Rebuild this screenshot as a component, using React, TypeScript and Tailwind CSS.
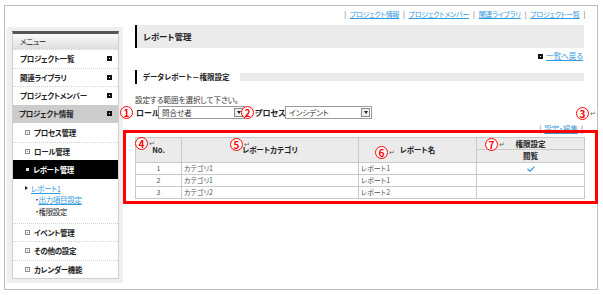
import type { ReactNode } from 'react'

const SIDE_TOP = ['プロジェクト一覧', '関連ライブラリ', 'プロジェクトメンバー']
const SIDE_SUB = ['プロセス管理', 'ロール管理']
const SIDE_BOTTOM = ['イベント管理', 'その他の設定', 'カレンダー機能']

const ROWS = [
  { no: 1, category: 'カテゴリ1', report: 'レポート1', view: true },
  { no: 2, category: 'カテゴリ1', report: 'レポート1', view: false },
  { no: 3, category: 'カテゴリ2', report: 'レポート2', view: false },
]

function DarkSquare() {
  return (
    <span className="flex h-[5px] w-[5px] items-center justify-center bg-[#111]">
      <span className="h-[1px] w-[1px] bg-white" />
    </span>
  )
}

function GraySquare() {
  return (
    <span className="mr-[4px] flex h-[5px] w-[5px] items-center justify-center border border-[#8a8a8a]">
      <span className="h-[1px] w-[1px] bg-[#8a8a8a]" />
    </span>
  )
}

function Mark({ n, className, arrow = true }: { n: string; className: string; arrow?: boolean }) {
  return (
    <div className={`absolute flex items-center ${className}`}>
      <span className="flex h-[13px] w-[13px] items-center justify-center rounded-full border border-[#f00] bg-white text-[10px] leading-none font-bold text-[#f00]">
        {n}
      </span>
      {arrow && <span className="ml-[1px] text-[7px] leading-none text-[#666]">↵</span>}
    </div>
  )
}

function Select({ value }: { value: string }) {
  return (
    <div className="flex h-[13px] w-[87px] items-center border border-[#9a9a9a] bg-white">
      <span className="flex-1 pl-[3px] text-[7.5px] leading-none text-[#333]">{value}</span>
      <span className="mr-[1px] flex h-[9px] w-[9px] items-center justify-center border border-[#888] bg-[#eee]">
        <span className="h-0 w-0 border-x-[2px] border-t-[3px] border-x-transparent border-t-[#222]" />
      </span>
    </div>
  )
}

function Th({ children, className = '', rowSpan }: { children?: ReactNode; className?: string; rowSpan?: number }) {
  return (
    <th
      rowSpan={rowSpan}
      className={`border border-[#c9c9c9] bg-[#ebebeb] p-0 text-center text-[7.5px] font-bold text-[#222] ${className}`}
    >
      {children}
    </th>
  )
}

export default function App() {
  return (
    <div className="relative h-[295px] w-[603px] bg-white pt-[5px] pl-[4px] font-['Noto_Sans_CJK_JP',sans-serif] text-[8px] text-[#333] [font-feature-settings:'palt']">
      <div className="h-[285px] w-[594px] border border-[#bdbdbd]">
        {/* top links */}
        <div className="flex h-[19px] justify-end gap-[4px] pt-[2px] pr-[12px] text-[7px] leading-[12px] tracking-[-0.3px]">
          <span className="text-[#555]">|</span>
          <a className="text-[#3399dd] underline">プロジェクト情報</a>
          <span className="text-[#555]">|</span>
          <a className="text-[#3399dd] underline">プロジェクトメンバー</a>
          <span className="text-[#555]">|</span>
          <a className="text-[#3399dd] underline">関連ライブラリ</a>
          <span className="text-[#555]">|</span>
          <a className="text-[#3399dd] underline">プロジェクト一覧</a>
          <span className="text-[#555]">|</span>
        </div>

        <div className="flex items-start">
          {/* sidebar */}
          <div className="mt-[2px] ml-[2px] h-[256px] w-[116px] bg-[#efefef] pt-[4px] pl-[5px]">
            <div className="w-[107px] border-x border-b border-t-[3px] border-x-[#cfcfcf] border-b-[#cfcfcf] border-t-[#555] bg-white text-[7.5px] tracking-[-0.3px]">
              <div className="flex h-[15px] items-center bg-gradient-to-b from-[#fbfbfb] to-[#dedede] pl-[7px] font-normal text-[#222]">
                メニュー
              </div>
              {SIDE_TOP.map((label) => (
                <div
                  key={label}
                  className="flex h-[18.5px] items-center justify-between border-t border-dotted border-[#cfcfcf] pr-[6px] pl-[7px] font-bold text-[#222]"
                >
                  {label}
                  <DarkSquare />
                </div>
              ))}
              <div className="flex h-[18.5px] items-center justify-between bg-[#cccccc] pr-[6px] pl-[6px] font-bold text-[#222]">
                プロジェクト情報
                <DarkSquare />
              </div>
              {SIDE_SUB.map((label, i) => (
                <div
                  key={label}
                  className={`flex h-[18.5px] items-center pl-[12px] font-bold text-[#222] ${i > 0 ? 'border-t border-dotted border-[#cfcfcf]' : ''}`}
                >
                  <GraySquare />
                  {label}
                </div>
              ))}
              <div className="flex h-[18.5px] items-center bg-black pl-[13px] font-bold text-white">
                <span className="mr-[4px] h-[3px] w-[3px] bg-[#ddd]" />
                レポート管理
              </div>
              <div className="h-[44px] pt-[4px] text-[7.5px] leading-[11.5px]">
                <div className="flex items-center pl-[12px]">
                  <span className="mr-[3px] h-0 w-0 border-y-[2px] border-l-[3px] border-y-transparent border-l-[#222]" />
                  <a className="text-[#3399dd] underline">レポート1</a>
                </div>
                <div className="pl-[22px]">
                  <span className="text-[#222]">・</span>
                  <a className="text-[#3399dd] underline">出力項目設定</a>
                </div>
                <div className="pl-[22px] text-[#222]">・権限設定</div>
              </div>
              {SIDE_BOTTOM.map((label) => (
                <div
                  key={label}
                  className="flex h-[18.5px] items-center border-t border-dotted border-[#cfcfcf] pl-[12px] font-bold text-[#222]"
                >
                  <GraySquare />
                  {label}
                </div>
              ))}
            </div>
          </div>

          {/* main */}
          <div className="ml-[12px] w-[449px]">
            <div className="flex h-[23px] items-center border-l-2 border-black bg-[#ebebeb] pl-[6px] text-[8.5px] font-bold text-[#222]">
              レポート管理
            </div>
            <div className="mt-[3px] flex h-[10px] items-center justify-end gap-[3px] pr-[1px] text-[7.5px]">
              <DarkSquare />
              <a className="text-[#3399dd] underline">一覧へ戻る</a>
            </div>
            <div className="mt-[9px] flex h-[14px] items-center border-l-2 border-black pl-[6px]">
              <span className="text-[7.5px] font-bold text-[#222]">データレポート－権限設定</span>
              <span className="ml-[10px] h-[8px] flex-1 bg-[#ebebeb]" />
            </div>
            <div className="mt-[11px] text-[7.5px] leading-[10px]">設定する範囲を選択して下さい。</div>
            <div className="mt-[1px] flex h-[13px] items-center text-[8px] whitespace-nowrap">
              <span className="ml-[1px] w-[22px] font-bold text-[#222]">ロール</span>
              <Select value="問合せ者" />
              <span className="ml-[10px] w-[30px] font-bold text-[#222]">プロセス</span>
              <Select value="インシデント" />
            </div>
            <div className="mt-[5px] flex h-[10px] items-center justify-end gap-[3px] pr-[1px] text-[7.5px]">
              <span className="text-[#555]">|</span>
              <a className="text-[#3399dd] underline">設定・編集</a>
              <span className="text-[#555]">|</span>
            </div>
            <table className="mt-[3px] w-[449px] table-fixed border-collapse">
              <colgroup>
                <col className="w-[46px]" />
                <col className="w-[177px]" />
                <col className="w-[118px]" />
                <col className="w-[108px]" />
              </colgroup>
              <thead>
                <tr className="h-[12px]">
                  <Th rowSpan={2}>No.</Th>
                  <Th rowSpan={2}>レポートカテゴリ</Th>
                  <Th rowSpan={2}>レポート名</Th>
                  <Th className="leading-[11px]">権限設定</Th>
                </tr>
                <tr className="h-[13px]">
                  <Th className="leading-[12px]">閲覧</Th>
                </tr>
              </thead>
              <tbody>
                {ROWS.map((r) => (
                  <tr key={r.no} className="h-[12px] text-[7px] leading-[11px] text-[#555]">
                    <td className="border border-[#c9c9c9] p-0 text-center">{r.no}</td>
                    <td className="border border-[#c9c9c9] p-0 pl-[2px]">{r.category}</td>
                    <td className="border border-[#c9c9c9] p-0 pl-[2px]">{r.report}</td>
                    <td className="border border-[#c9c9c9] p-0">
                      {r.view && (
                        <svg width="8" height="6" viewBox="0 0 8 6" className="mx-auto">
                          <path d="M0.5 3 L3 5.2 L7.5 0.6" fill="none" stroke="#3399dd" strokeWidth="1.2" />
                        </svg>
                      )}
                    </td>
                  </tr>
                ))}
              </tbody>
            </table>
          </div>
        </div>
      </div>

      {/* annotations */}
      <div className="absolute top-[130px] left-[123px] h-[74px] w-[475px] border-[3px] border-[#f00]" />
      <Mark n="1" className="top-[106px] left-[120px]" arrow={false} />
      <Mark n="2" className="top-[106px] left-[241px]" />
      <Mark n="3" className="top-[107px] left-[576px]" />
      <Mark n="4" className="top-[137px] left-[135px]" />
      <Mark n="5" className="top-[138px] left-[230px]" />
      <Mark n="6" className="top-[146px] left-[375px]" />
      <Mark n="7" className="top-[138px] left-[485px]" />
    </div>
  )
}
